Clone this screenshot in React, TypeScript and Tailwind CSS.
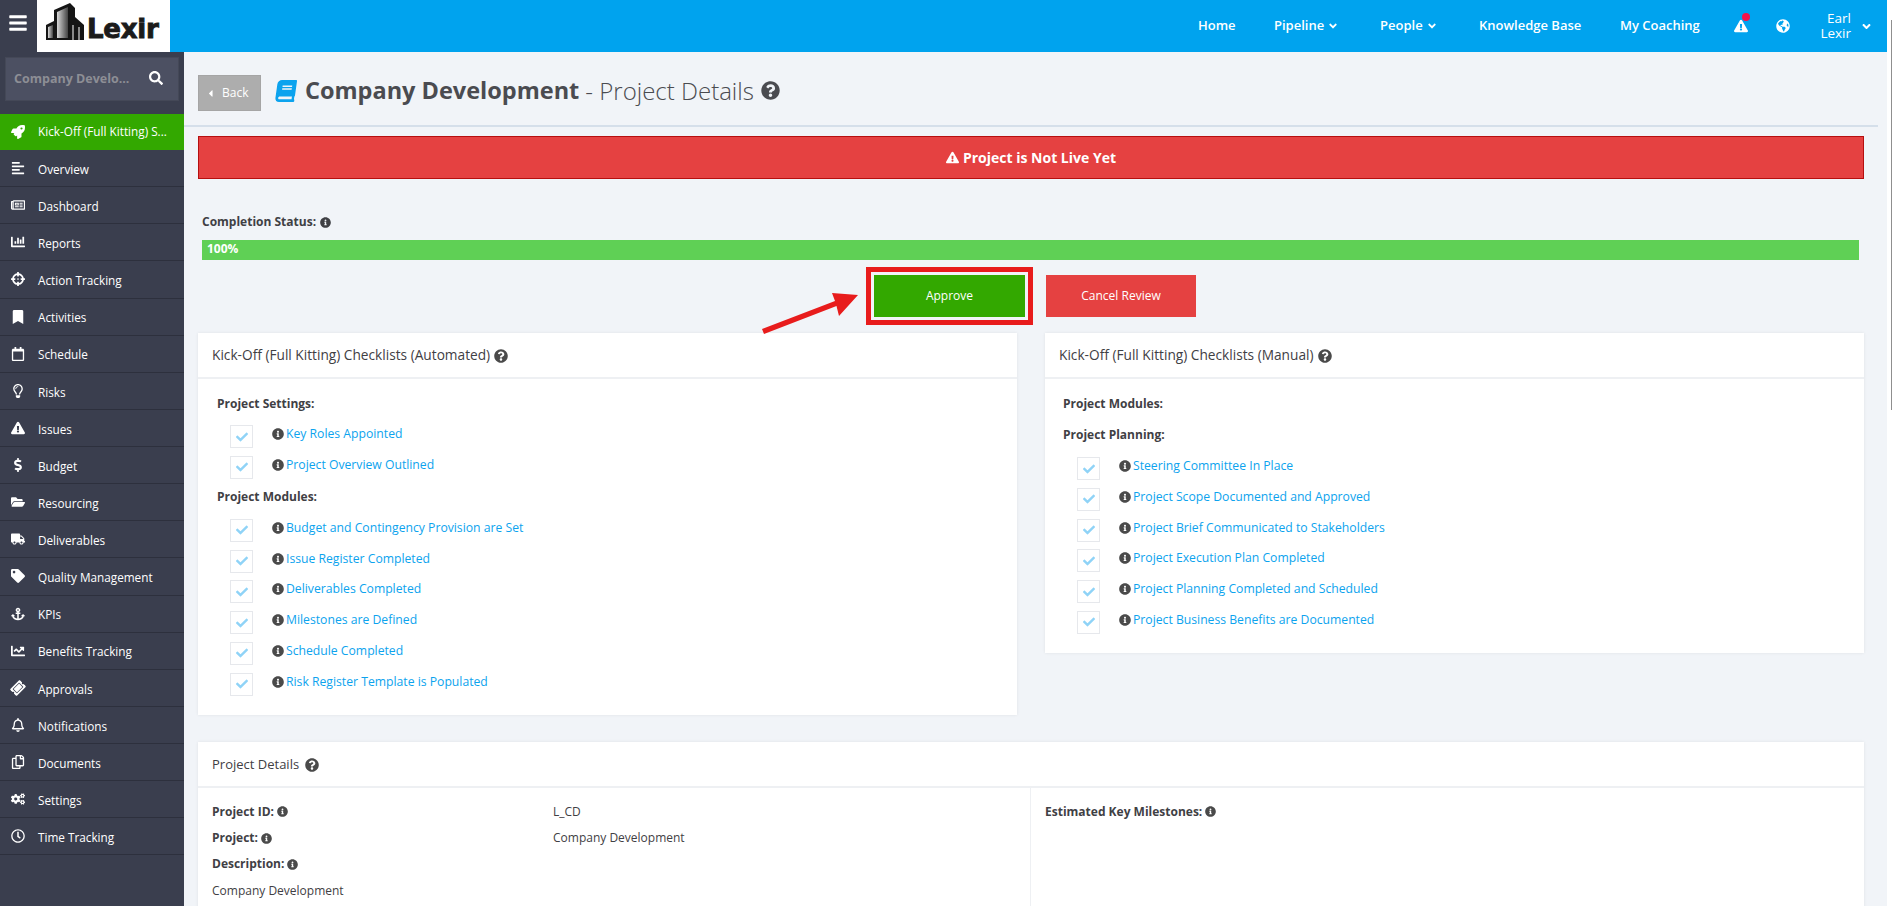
import type { ReactNode } from "react";
import type { IconType } from "react-icons";
import {
  FaAlignLeft, FaAnchor, FaAngleDown, FaBars, FaBook, FaBookmark, FaCaretLeft, FaChartBar, FaChartLine, FaCheck,
  FaCogs, FaCrosshairs, FaDollarSign, FaExclamationTriangle, FaFolderOpen, FaGlobeAmericas, FaInfoCircle,
  FaQuestionCircle, FaRegBell, FaRegCalendar, FaRegClock, FaRegCopy, FaRegLightbulb, FaRegNewspaper, FaRocket,
  FaSearch, FaTag, FaTicketAlt, FaTruck,
} from "react-icons/fa";

const menu: [string, IconType][] = [
  ["Overview", FaAlignLeft],
  ["Dashboard", FaRegNewspaper],
  ["Reports", FaChartBar],
  ["Action Tracking", FaCrosshairs],
  ["Activities", FaBookmark],
  ["Schedule", FaRegCalendar],
  ["Risks", FaRegLightbulb],
  ["Issues", FaExclamationTriangle],
  ["Budget", FaDollarSign],
  ["Resourcing", FaFolderOpen],
  ["Deliverables", FaTruck],
  ["Quality Management", FaTag],
  ["KPIs", FaAnchor],
  ["Benefits Tracking", FaChartLine],
  ["Approvals", FaTicketAlt],
  ["Notifications", FaRegBell],
  ["Documents", FaRegCopy],
  ["Settings", FaCogs],
  ["Time Tracking", FaRegClock],
];

function Logo() {
  return (
    <div className="flex h-[52px] w-[133px] items-center bg-white pl-[9px]">
      <svg width="38" height="38" viewBox="0 0 38 38" className="mb-[8px] shrink-0">
        <defs>
          <linearGradient id="tower" x1="0" x2="1" y1="0" y2="0">
            <stop offset="0" stopColor="#d8d8d8" />
            <stop offset="1" stopColor="#444" />
          </linearGradient>
        </defs>
        <path d="M0 37V22l8-4V7l16-7 5 5v9l9 8v15z" fill="#151515" />
        <path d="M11 35V9l11-5v31z" fill="url(#tower)" />
        <path d="M2 35V24l5-2v13z" fill="url(#tower)" />
        <path d="M26 37V22h2v15zM32 37V24h2v13z" fill="#8a8a8a" />
      </svg>
      <span className="ml-[3px] mt-[5px] font-['DejaVu_Sans'] text-[26px] font-bold leading-none tracking-[-0.2px] text-[#1b1b1b] [-webkit-text-stroke:0.9px_#1b1b1b]">
        Lexir
      </span>
    </div>
  );
}

function TopNav() {
  return (
    <header className="flex h-[52px] shrink-0 items-stretch">
      <div className="flex w-[37px] items-center justify-center bg-[#3a3e4e] pb-[7px] pr-[2px] text-white">
        <FaBars size={20} />
      </div>
      <Logo />
      <nav className="flex flex-1 items-center bg-[#00a3ee] pl-[1028px] text-[13px] font-semibold text-white">
        <a className="w-[76px]">Home</a>
        <a className="flex w-[106px] items-center gap-[3px]">Pipeline <FaAngleDown size={12} /></a>
        <a className="flex w-[99px] items-center gap-[3px]">People <FaAngleDown size={12} /></a>
        <a className="w-[141px]">Knowledge Base</a>
        <a className="w-[114px]">My Coaching</a>
        <span className="relative w-[42px]">
          <FaExclamationTriangle size={14} />
          <span className="absolute left-[8px] top-[-6px] size-[8px] rounded-full bg-[#f5134a]" />
        </span>
        <span className="w-[38px]"><FaGlobeAmericas size={14} /></span>
        <span className="w-[37px] text-right text-[13.5px] font-normal leading-[15px]">Earl<br />Lexir</span>
        <FaAngleDown size={13} className="ml-[9px]" />
      </nav>
    </header>
  );
}

function Sidebar() {
  return (
    <aside className="w-[184px] shrink-0 bg-[#3a3e4e] text-[11.75px] text-white">
      <div className="h-[62px] px-[5px] pt-[5px]">
        <div className="flex h-[44px] items-center justify-between border border-[#444857] bg-[#4c5062] pl-[8px] pr-[15px]">
          <span className="text-[12.5px] font-bold text-[#8d8e95]">Company Develo...</span>
          <FaSearch size={14} className="mb-[3px]" />
        </div>
      </div>
      <a className="flex h-[36px] items-center bg-[#33a800] pl-[11px]">
        <FaRocket size={14} className="w-[14px] shrink-0" />
        <span className="ml-[13px]">Kick-Off (Full Kitting) S...</span>
      </a>
      {menu.map(([label, Icon]) => (
        <a key={label} className="flex h-[37.14px] items-center border-b border-[#2d303d] pl-[11px]">
          <span className="flex w-[14px] shrink-0 justify-center">
            <Icon size={14} className={label === "Approvals" ? "-rotate-45" : ""} />
          </span>
          <span className="ml-[13px] pt-[3px]">{label}</span>
        </a>
      ))}
    </aside>
  );
}

function Card({ title, className, titleClass, children }: { title: string; className?: string; titleClass?: string; children: ReactNode }) {
  return (
    <section className={`bg-white shadow-[0_0_3px_rgba(0,0,0,0.08)] ${className ?? ""}`}>
      <h2 className={`flex h-[46px] items-center border-b-2 border-[#eef0f3] pl-[14px] pt-[1px] text-[#3f4044] ${titleClass ?? "gap-[4px] text-[13.7px]"}`}>
        {title} <FaQuestionCircle size={14} className="text-[#4a4a4a]" />
      </h2>
      {children}
    </section>
  );
}

function Heading({ className, children }: { className?: string; children: ReactNode }) {
  return <p className={`flex h-[28px] items-center text-[12px] font-bold text-[#3f4044] ${className ?? ""}`}>{children}</p>;
}

function Check({ label }: { label: string }) {
  return (
    <div className="flex h-[23px] items-start pl-[13px]">
      <span className="flex size-[23px] shrink-0 items-center justify-center border border-[#e6e8ec] text-[#8fd3f7]">
        <FaCheck size={12} />
      </span>
      <span className="ml-[19px] flex items-center text-[12.2px] leading-[18px] text-[#0ca3ee]">
        <FaInfoCircle size={12} className="mr-[2px] text-[#4a4a4a]" />
        {label}
      </span>
    </div>
  );
}

function Checklists() {
  return (
    <div className="mt-[8px] flex items-start gap-[28px]">
      <Card title="Kick-Off (Full Kitting) Checklists (Automated)" className="h-[382px] w-[819px]">
        <div className="pl-[19px] pt-[11px]">
          <Heading>Project Settings:</Heading>
          <div className="mt-[7px] flex flex-col gap-[7.8px]">
            <Check label="Key Roles Appointed" />
            <Check label="Project Overview Outlined" />
          </div>
          <Heading className="mt-[4px]">Project Modules:</Heading>
          <div className="mt-[8px] flex flex-col gap-[7.8px]">
            <Check label="Budget and Contingency Provision are Set" />
            <Check label="Issue Register Completed" />
            <Check label="Deliverables Completed" />
            <Check label="Milestones are Defined" />
            <Check label="Schedule Completed" />
            <Check label="Risk Register Template is Populated" />
          </div>
        </div>
      </Card>
      <Card title="Kick-Off (Full Kitting) Checklists (Manual)" className="h-[320px] w-[819px]">
        <div className="pl-[18px] pt-[11px]">
          <Heading>Project Modules:</Heading>
          <Heading className="mt-[3px]">Project Planning:</Heading>
          <div className="ml-[1px] mt-[8px] flex flex-col gap-[7.8px]">
            <Check label="Steering Committee In Place" />
            <Check label="Project Scope Documented and Approved" />
            <Check label="Project Brief Communicated to Stakeholders" />
            <Check label="Project Execution Plan Completed" />
            <Check label="Project Planning Completed and Scheduled" />
            <Check label="Project Business Benefits are Documented" />
          </div>
        </div>
      </Card>
    </div>
  );
}

function InfoLabel({ children }: { children: ReactNode }) {
  return (
    <span className="flex items-center gap-[3px] font-bold">
      {children} <FaInfoCircle size={11} className="text-[#4a4a4a]" />
    </span>
  );
}

function ProjectDetails() {
  return (
    <Card title="Project Details" className="mt-[27px] h-[300px] w-[1666px]" titleClass="gap-[6px] text-[13px]">
      <div className="flex h-full text-[12px] text-[#3f4044]">
        <div className="w-[833px] border-r border-[#eef0f3] pl-[14px] pt-[10px]">
          <div className="flex h-[27px] items-center">
            <span className="w-[341px]"><InfoLabel>Project ID:</InfoLabel></span>
            <span>L_CD</span>
          </div>
          <div className="flex h-[26px] items-center">
            <span className="w-[341px]"><InfoLabel>Project:</InfoLabel></span>
            <span>Company Development</span>
          </div>
          <div className="flex h-[26px] items-center"><InfoLabel>Description:</InfoLabel></div>
          <div className="flex h-[27px] items-center">Company Development</div>
        </div>
        <div className="pl-[14px] pt-[10px]">
          <div className="flex h-[27px] items-center"><InfoLabel>Estimated Key Milestones:</InfoLabel></div>
        </div>
      </div>
    </Card>
  );
}

function Main() {
  return (
    <main className="min-w-0 flex-1 overflow-hidden bg-[#f1f4f8]">
      <div className="mr-[9px] flex h-[75px] border-b-2 border-[#d5dfea] pl-[14px]">
        <div className="flex items-start pt-[23px]">
          <a className="flex h-[36px] w-[63px] items-center border border-[#a5a5a5] bg-[#adadad] pl-[6px] text-[12px] text-white">
            <FaCaretLeft size={11} />
            <span className="ml-[6px]">Back</span>
          </a>
          <div className="ml-[14px] flex h-[36px] items-center pb-[5px] text-[24px] text-[#4a4b50]">
            <FaBook size={22} className="skew-x-[-8deg] text-[#0ca3ee]" />
            <span className="ml-[8px] text-[23.5px] font-bold">Company Development</span>
            <span className="ml-[6px] font-light">- Project Details</span>
            <FaQuestionCircle size={19} className="ml-[7px]" />
          </div>
        </div>
      </div>
      <div className="ml-[14px] mr-[23px]">
        <div className="mt-[9px] flex h-[43px] items-center justify-center gap-[4px] border border-[#b60f0f] bg-[#e54141] text-[14px] font-bold text-white">
          <FaExclamationTriangle size={13} /> Project is Not Live Yet
        </div>
        <p className="ml-[4px] mt-[34px] flex h-[18px] items-center gap-[4px] text-[12px] font-bold text-[#3f4044]">
          Completion Status: <FaInfoCircle size={11} />
        </p>
        <div className="ml-[4px] mr-[5px] mt-[9px] flex h-[20px] items-center bg-[#5fd055] pb-[2px] pl-[5px] text-[12px] font-bold text-white">
          100%
        </div>
        <div className="relative mt-[7px] flex items-center justify-center gap-[13px] text-[12px] text-white">
          <svg width="104" height="46" viewBox="0 0 104 46" className="absolute left-[562px] top-[23px]">
            <path d="M2 39L75 11 72 3 98 5 79 26 76.5 16 4 44z" fill="#e81c1c" />
          </svg>
          <div className="border-[5px] border-[#e81c1c] p-[3px]">
            <button className="block h-[42px] w-[151px] bg-[#33a800]">Approve</button>
          </div>
          <button className="h-[42px] w-[150px] bg-[#e54141]">Cancel Review</button>
        </div>
        <Checklists />
        <ProjectDetails />
      </div>
    </main>
  );
}

export default function App() {
  return (
    <div className="relative flex h-screen flex-col overflow-hidden bg-white pr-[5px] font-['Open_Sans',sans-serif]">
      <TopNav />
      <div className="flex min-h-0 flex-1">
        <Sidebar />
        <Main />
      </div>
      {/* scrollbar thumb */}
      <div className="absolute right-0 top-[20px] h-[390px] w-[1px] bg-[#8f8f8f]" />
    </div>
  );
}
